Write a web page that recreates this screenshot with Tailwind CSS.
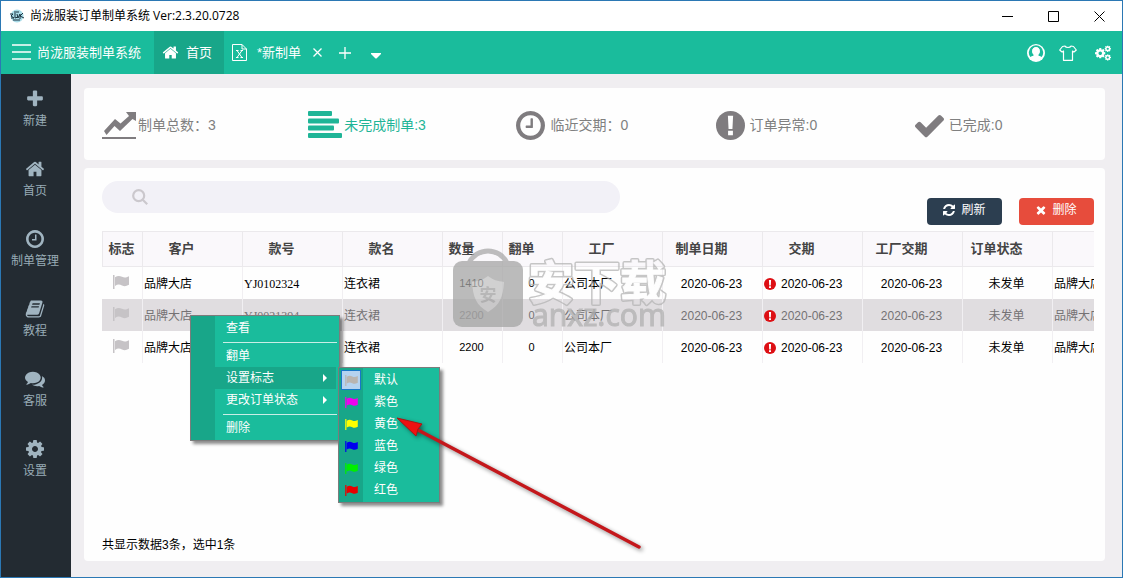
<!DOCTYPE html>
<html lang="zh-CN">
<head>
<meta charset="utf-8">
<meta name="viewport" content="width=device-width, initial-scale=1">
<title>尚泷服装订单制单系统</title>
<script src="https://cdn.jsdelivr.net/npm/@tailwindcss/browser@4"></script>
</head>
<body class="relative flex h-screen flex-col overflow-hidden border border-[#2b78b4] bg-[#f0eef1] font-['Liberation_Sans','Noto_Sans_CJK_SC',sans-serif] text-xs text-black">

<svg class="hidden" aria-hidden="true">
  <symbol id="home" viewBox="0 0 1792 1792"><path d="M1472 992v480q0 26-19 45t-45 19h-384v-384h-256v384h-384q-26 0-45-19t-19-45v-480q0-1 .5-3t.5-3l575-474 575 474q1 2 1 6zm223-69l-62 74q-8 9-21 11h-3q-13 0-21-7l-692-577-692 577q-12 8-24 7-13-2-21-11l-62-74q-8-10-7-23.5t11-21.5l719-599q32-26 76-26t76 26l244 204v-195q0-14 9-23t23-9h192q14 0 23 9t9 23v408l219 182q10 8 11 21.5t-7 23.5z"/></symbol>
  <symbol id="plus" viewBox="0 0 1792 1792"><path d="M1600 736v192q0 40-28 68t-68 28h-416v416q0 40-28 68t-68 28h-192q-40 0-68-28t-28-68v-416h-416q-40 0-68-28t-28-68v-192q0-40 28-68t68-28h416v-416q0-40 28-68t68-28h192q40 0 68 28t28 68v416h416q40 0 68 28t28 68z"/></symbol>
  <symbol id="clock" viewBox="128 128 1536 1536"><path d="M1024 544v448q0 14-9 23t-23 9h-320q-14 0-23-9t-9-23v-64q0-14 9-23t23-9h224v-352q0-14 9-23t23-9h64q14 0 23 9t9 23zm416 352q0-148-73-273t-198-198-273-73-273 73-198 198-73 273 73 273 198 198 273 73 273-73 198-198 73-273zm224 0q0 209-103 385.5t-279.5 279.5-385.5 103-385.5-103-279.5-279.5-103-385.5 103-385.5 279.5-279.5 385.5-103 385.5 103 279.5 279.5 103 385.5z"/></symbol>
  <symbol id="book" viewBox="0 0 1792 1792"><path d="M1703 478q40 57 18 129l-275 906q-19 64-76.5 107.5t-122.5 43.5h-923q-77 0-148.5-53.5t-99.5-131.5q-24-67-2-127 0-4 3-27t4-37q1-8-3-21.5t-3-19.5q2-11 8-21t16.5-23.5 16.5-23.5q23-38 45-91.5t30-91.5q3-10 .5-30t-.5-28q3-11 17-28t17-23q21-36 42-92t25-90q1-9-2.5-32t.5-28q4-13 22-30.5t22-22.5q19-26 42.5-84.5t27.5-96.5q1-8-3-25.5t-2-26.5q2-8 9-18t18-23 17-21q8-12 16.5-30.5t15-35 16-36 19.5-32 26.5-23.5 36-11.5 47.5 5.5l-1 3q38-9 51-9h761q74 0 114 56t18 130l-274 906q-36 119-71.5 153.5t-128.5 34.5h-869q-27 0-38 15-11 16-1 43 24 70 144 70h923q29 0 56-15.5t35-41.5l300-987q7-22 5-57 38 15 59 43zm-1064 2q-4 13 2 22.5t20 9.5h608q13 0 25.5-9.5t16.5-22.5l21-64q4-13-2-22.5t-20-9.5h-608q-13 0-25.5 9.5t-16.5 22.5zm-83 256q-4 13 2 22.5t20 9.5h608q13 0 25.5-9.5t16.5-22.5l21-64q4-13-2-22.5t-20-9.5h-608q-13 0-25.5 9.5t-16.5 22.5z"/></symbol>
  <symbol id="comments" viewBox="0 0 1792 1792"><path d="M1408 768q0 139-94 257t-256.5 186.5-353.5 68.5q-86 0-176-16-124 88-278 128-36 9-86 16h-3q-11 0-20.5-8t-11.5-21q-1-3-1-6.5t.5-6.5 2-6l2.5-5 3.5-5.5 4-5 4.5-5 4-4.5q5-6 23-25t26-29.5 22.5-29 25-38.5 20.5-44q-124-72-195-177t-71-224q0-139 94-257t256.500-186.500 353.500-68.500 353.500 68.500 256.500 186.500 94 257zm384 256q0 120-71 224.500t-195 176.500q10 24 20.500 44t25 38.500 22.500 29 26 29.500 23 25q1 1 4 4.500t4.500 5 4 5 3.500 5.500l2.500 5 2 6 .5 6.500-1 6.500q-3 14-13 22t-22 7q-50-7-86-16-154-40-278-128-90 16-176 16-271 0-472-132 58 4 88 4 161 0 309-45t264-129q125-92 192-212t67-254q0-77-23-152 129 71 204 178t75 230z"/></symbol>
  <symbol id="cog" viewBox="128 128 1536 1536"><path d="M1152 896q0-106-75-181t-181-75-181 75-75 181 75 181 181 75 181-75 75-181zm512-109v222q0 12-8 23t-20 13l-185 28q-19 54-39 91 35 50 107 138 10 12 10 25t-9 23q-27 37-99 108t-94 71q-12 0-26-9l-138-108q-44 23-91 38-16 136-29 186-7 28-36 28h-222q-14 0-24.5-8.5t-11.5-21.5l-28-184q-49-16-90-37l-141 107q-10 9-25 9-14 0-25-11-126-114-165-168-7-10-7-23 0-12 8-23 15-21 51-66.5t54-70.5q-27-50-41-99l-183-27q-13-2-21-12.5t-8-23.5v-222q0-12 8-23t19-13l186-28q14-46 39-92-40-57-107-138-10-12-10-24 0-10 9-23 26-36 98.5-107.5t94.5-71.5q13 0 26 10l138 107q44-23 91-38 16-136 29-186 7-28 36-28h222q14 0 24.5 8.5t11.5 21.5l28 184q49 16 90 37l142-107q9-9 24-9 13 0 25 10 129 119 165 170 7 8 7 22 0 12-8 23-15 21-51 66.5t-54 70.5q26 50 41 98l183 28q13 2 21 12.5t8 23.5z"/></symbol>
  <symbol id="check" viewBox="121 128 1550 1536"><path d="M1671 566q0 40-28 68l-724 724-136 136q-28 28-68 28t-68-28l-136-136-362-362q-28-28-28-68t28-68l136-136q28-28 68-28t68 28l294 295 656-657q28-28 68-28t68 28l136 136q28 28 28 68z"/></symbol>
  <symbol id="times" viewBox="200 200 1392 1392"><path d="M1490 1322q0 40-28 68l-136 136q-28 28-68 28t-68-28l-294-294-294 294q-28 28-68 28t-68-28l-136-136q-28-28-28-68t28-68l294-294-294-294q-28-28-28-68t28-68l136-136q28-28 68-28t68 28l294 294 294-294q28-28 68-28t68 28l136 136q28 28 28 68t-28 68l-294 294 294 294q28 28 28 68z"/></symbol>
  <symbol id="refresh" viewBox="128 128 1536 1536"><path d="M1639 1056q0 5-1 7-64 268-268 434.5t-478 166.5q-146 0-282.5-55t-243.5-157l-129 129q-19 19-45 19t-45-19-19-45v-448q0-26 19-45t45-19h448q26 0 45 19t19 45-19 45l-137 137q71 66 161 102t187 36q134 0 250-65t186-179q11-17 53-117 8-23 30-23h192q13 0 22.500 9.500t9.500 22.500zm25-800v448q0 26-19 45t-45 19h-448q-26 0-45-19t-19-45 19-45l138-138q-148-137-349-137-134 0-250 65t-186 179q-11 17-53 117-8 23-30 23h-199q-13 0-22.500-9.500t-9.500-22.500v-7q65-268 270-434.500t480-166.500q146 0 284 55.500t245 156.500l130-129q19-19 45-19t45 19 19 45z"/></symbol>
  <symbol id="flag" viewBox="0 0 16 14"><path d="M0 0h1.500v14H0zM2 2.300C4.500.6 6.500.6 9 1.800s4 .9 7-.6v8.600c-3 1.500-4.500 1.800-7 .6s-4.500-1.200-7 .5z"/></symbol>
  <symbol id="alert" viewBox="0 0 30 30"><circle cx="15" cy="15" r="15"/><path fill="#fff" d="M12.300 5h5.400l-.7 13.500h-4zM12.500 20.500h5v4.500h-5z"/></symbol>
</svg>

<!-- Window title bar -->
<header class="flex h-[30px] shrink-0 items-center bg-white pl-2">
  <svg class="size-4" viewBox="0 0 16 16" fill="none">
    <circle cx="8" cy="8" r="6.500" fill="#a9dbe8"/>
    <path d="M1 6l3 0-2 2 3 2-3 0M6 5l0 5 3-1M8 6l1 4 2-4 0 5M14 5l-3 3 4 2M4 12l7 0M5 4l5 0" stroke="#1b3340"/>
  </svg>
  <h1 class="ml-[5px] flex-1 font-['Open_Sans','Noto_Sans_CJK_SC',sans-serif]">尚泷服装订单制单系统 Ver:2.3.20.0728</h1>
  <button type="button" aria-label="最小化" class="grid h-full w-[46px] place-items-center"><svg class="size-[11px]" viewBox="0 0 11 11" stroke="#000"><path d="M0 5.500h11"/></svg></button>
  <button type="button" aria-label="最大化" class="grid h-full w-[46px] place-items-center"><svg class="size-[11px]" viewBox="0 0 11 11" fill="none" stroke="#000"><path d="M.5.500h10v10H.5z"/></svg></button>
  <button type="button" aria-label="关闭" class="grid h-full w-[46px] place-items-center"><svg class="size-[11px]" viewBox="0 0 11 11" stroke="#000"><path d="M.5.500l10 10M10.500.500l-10 10"/></svg></button>
</header>

<!-- Tab bar -->
<nav aria-label="标签页" class="flex h-[43px] shrink-0 items-center bg-[#1abc9c] text-[13px] text-white">
  <button type="button" class="flex h-full w-[153px] items-center gap-[6px] pl-[11px]">
    <svg class="h-4 w-[19px] -translate-y-px" viewBox="0 0 19 16" stroke="#fff" stroke-width="1.500"><path d="M0 1h19M0 8h19M0 15h19"/></svg>
    <span>尚泷服装制单系统</span>
  </button>
  <button type="button" class="flex h-full w-[70px] items-center gap-[7px] bg-[#18a689] pl-2">
    <svg class="size-[17px] fill-white"><use href="#home"/></svg>
    <span>首页</span>
  </button>
  <button type="button" class="flex h-full items-center gap-[10px] pl-2">
    <svg class="h-[17px] w-[15px]" viewBox="0 0 15 17" fill="none" stroke="#fff"><path d="M.5.500h9.500l4.500 4.500v11.500H.5zM10 .5V5h4.500"/><path d="M5 6.500l5 7M10 6.500l-5 7M4 6.500h2.500M8.500 6.500H11M4 13.500h2.500M8.500 13.500H11"/></svg>
    <span>*新制单</span>
  </button>
  <button type="button" aria-label="关闭标签" class="ml-3 grid size-[9px] place-items-center"><svg class="size-[9px]" viewBox="0 0 9 9" stroke="#fff" stroke-width="1.300"><path d="M.5.500l8 8M8.500.500l-8 8"/></svg></button>
  <button type="button" aria-label="新标签" class="ml-[17px] grid size-3 place-items-center"><svg class="size-3" viewBox="0 0 12 12" stroke="#fff" stroke-width="1.300"><path d="M0 6h12M6 0v12"/></svg></button>
  <button type="button" aria-label="更多" class="ml-5 grid h-3 place-items-center pt-[6px]"><svg class="h-[6px] w-[10px]" viewBox="0 0 10 6" fill="#fff"><path d="M0 0h10v1L6 5q-1 1-2 0L0 1z"/></svg></button>
  <div class="ml-auto flex items-center pr-[11px]">
    <button type="button" aria-label="用户"><svg class="size-[18px]" viewBox="0 0 18 18"><circle cx="9" cy="9" r="9" fill="#fff"/><path fill="#1abc9c" d="M9 3c2.500 0 3.800 1.800 3.800 4.200 0 1.600-.7 2.900-1.600 3.700v.6l3.400 1.600a7.200 7.200 0 1 0-11.200 0l3.400-1.600v-.6c-.9-.8-1.600-2.100-1.600-3.700C5.200 4.800 6.500 3 9 3z"/><circle cx="9" cy="7.200" r="3.700" fill="#fff"/><path fill="#fff" d="M7 10h4v1.500l3.700 1.700a7.200 7.200 0 0 1-11.400 0L7 11.500z"/></svg></button>
    <button type="button" aria-label="皮肤" class="ml-[14px]"><svg class="h-4 w-[18px]" viewBox="0 0 18 16" fill="none" stroke="#fff" stroke-width="1.200" stroke-linejoin="round"><path d="M6 1L3.500 1.500.700 5l2.300 2 1.500-1v9.300h9V6L15 7l2.300-2-2.800-3.500L12 1c-.8 2-5.200 2-6 0z"/></svg></button>
    <button type="button" aria-label="设置选项" class="ml-[18px]"><svg class="size-4 fill-white" viewBox="0 0 16 16"><use href="#cog" x="0" y="3" width="10.500" height="10.500"/><use href="#cog" x="9.500" y="0.500" width="6.500" height="6.500"/><use href="#cog" x="9.500" y="9.200" width="6.500" height="6.500"/></svg></button>
  </div>
</nav>

<div class="flex min-h-0 flex-1">
  <!-- Sidebar -->
  <nav aria-label="主导航" class="flex w-[70px] shrink-0 flex-col bg-[#232b32] fill-[#a0b4c0] pr-[2px] text-[#98abb6]">
    <a href="#" class="flex h-[70px] flex-col items-center gap-1 pt-[15px] leading-4"><svg class="size-5"><use href="#plus"/></svg>新建</a>
    <a href="#" class="flex h-[70px] flex-col items-center gap-1 pt-[15px] leading-4"><svg class="size-5"><use href="#home"/></svg>首页</a>
    <a href="#" class="flex h-[70px] flex-col items-center gap-1 pt-[15px] leading-4"><svg class="size-5 p-px"><use href="#clock"/></svg>制单管理</a>
    <a href="#" class="flex h-[70px] flex-col items-center gap-1 pt-[15px] leading-4"><svg class="size-5"><use href="#book"/></svg>教程</a>
    <a href="#" class="flex h-[70px] flex-col items-center gap-1 pt-[15px] leading-4"><svg class="size-5"><use href="#comments"/></svg>客服</a>
    <a href="#" class="flex h-[70px] flex-col items-center gap-1 pt-[15px] leading-4"><svg class="size-5 p-px"><use href="#cog"/></svg>设置</a>
  </nav>

  <main class="flex min-w-0 flex-1 flex-col gap-2 pt-[14px] pr-[17px] pb-4 pl-[13px]">
    <!-- Statistics -->
    <section aria-label="统计" class="grid h-[72px] shrink-0 grid-cols-[206fr_208fr_199fr_199fr_190fr] items-center rounded bg-[#fefefe] pt-[2px] pl-[18px] text-sm text-[#808080] fill-[#7f7c7f]">
      <div class="flex items-center gap-[2px]"><svg class="h-7 w-[34px]" viewBox="0 0 34 28"><path d="M0 26h34v2H0zM2 20L13 8l5.500 4.500L27 5l-3-4h10v9l-3.500-2L18 20l-5.500-5-8 9z"/></svg>制单总数：3</div>
      <div class="flex items-center gap-[2px] fill-[#1fb597] text-[#1fb597]"><svg class="h-7 w-[34px]" viewBox="0 0 34 28"><rect y="0" width="24" height="5" rx="1"/><rect y="7.500" width="31" height="5" rx="1"/><rect y="14.500" width="26" height="5" rx="1"/><rect y="22" width="34" height="5" rx="1"/></svg>未完成制单:3</div>
      <div class="flex items-center gap-[5px]"><svg class="size-[29px]"><use href="#clock"/></svg>临近交期：0</div>
      <div class="flex items-center gap-[5px]"><svg class="size-[29px]"><use href="#alert"/></svg>订单异常:0</div>
      <div class="flex items-center gap-[5px]"><svg class="size-[29px]"><use href="#check"/></svg>已完成:0</div>
    </section>

    <!-- Order list -->
    <section aria-label="订单列表" class="flex min-h-0 flex-1 flex-col rounded bg-[#fefefe] pt-[13px] pr-[11px] pb-2 pl-[18px]">
      <div class="mb-[6px] flex h-11 items-end gap-[17px]">
        <label class="mr-auto flex h-8 w-[518px] items-center gap-2 self-start rounded-full bg-[#f2f1f7] pl-[30px]">
          <svg class="size-4 shrink-0" viewBox="0 0 16 16" fill="none" stroke="#cbc8cd" stroke-width="2.200"><circle cx="6.700" cy="6.700" r="5.500"/><path d="M10.700 10.700l4.500 4.500"/></svg>
          <input type="search" aria-label="搜索" class="min-w-0 flex-1 bg-transparent outline-none">
        </label>
        <button type="button" class="flex h-[27px] w-[75px] items-center justify-center gap-[6px] rounded bg-[#2c3e50] pb-1 text-white"><svg class="size-3 fill-white"><use href="#refresh"/></svg>刷新</button>
        <button type="button" class="flex h-[27px] w-[75px] items-center justify-center gap-[6px] rounded bg-[#e74c3c] pb-1 text-white"><svg class="size-[10px] fill-white"><use href="#times"/></svg>删除</button>
      </div>

      <div class="overflow-hidden">
        <table class="w-[1050px] min-w-full table-fixed border-separate border-spacing-0">
          <colgroup><col class="w-10"><col class="w-[100px]"><col class="w-[100px]"><col class="w-[100px]"><col class="w-[60px]"><col class="w-[60px]"><col class="w-[100px]"><col class="w-[100px]"><col class="w-[100px]"><col class="w-[100px]"><col class="w-[90px]"><col class="w-[100px]"></colgroup>
          <thead class="bg-[#faf8fb] text-[13px] text-[#444] [&_th]:h-9 [&_th]:border-y [&_th]:border-l [&_th]:border-[#ebe9ec] [&_th]:p-0 [&_th]:pr-[22px] [&_th]:font-bold">
            <tr><th scope="col" class="pr-[2px]!">标志</th><th scope="col">客户</th><th scope="col">款号</th><th scope="col">款名</th><th scope="col">数量</th><th scope="col">翻单</th><th scope="col">工厂</th><th scope="col">制单日期</th><th scope="col">交期</th><th scope="col">工厂交期</th><th scope="col">订单状态</th><th scope="col"></th></tr>
          </thead>
          <tbody class="text-center [&_td]:h-8 [&_td]:border-l [&_td]:border-[#f1eff2] [&_td]:pt-px [&_td]:pr-[3px] [&_td]:pb-0 [&_td]:pl-px">
            <tr>
              <td class="border-l-0!"><svg aria-label="默认标志" class="mx-auto mb-1 h-[14px] w-4 fill-[#c6c3c6]"><use href="#flag"/></svg></td>
              <td class="text-left">品牌大店</td><td class="text-left font-['Liberation_Serif',serif]">YJ0102324</td><td class="text-left">连衣裙</td><td class="text-[11px]">1410</td><td class="text-[11px]">0</td><td class="text-left">公司本厂</td><td>2020-06-23</td>
              <td><span class="flex items-center gap-[5px]"><svg aria-label="临期" class="size-3 fill-[#dd0f14]"><use href="#alert"/></svg>2020-06-23</span></td>
              <td>2020-06-23</td><td>未发单</td><td class="text-left">品牌大店</td>
            </tr>
            <tr aria-selected="true" class="bg-[#e0dde0] text-[#747274]">
              <td class="border-l-0!"><svg aria-label="默认标志" class="mx-auto mb-1 h-[14px] w-4 fill-[#c6c3c6]"><use href="#flag"/></svg></td>
              <td class="text-left">品牌大店</td><td class="text-left font-['Liberation_Serif',serif]">YJ0021394</td><td class="text-left">连衣裙</td><td class="text-[11px]">2200</td><td class="text-[11px]">0</td><td class="text-left">公司本厂</td><td>2020-06-23</td>
              <td><span class="flex items-center gap-[5px]"><svg aria-label="临期" class="size-3 fill-[#dd0f14]"><use href="#alert"/></svg>2020-06-23</span></td>
              <td>2020-06-23</td><td>未发单</td><td class="text-left">品牌大店</td>
            </tr>
            <tr>
              <td class="border-l-0!"><svg aria-label="默认标志" class="mx-auto mb-1 h-[14px] w-4 fill-[#c6c3c6]"><use href="#flag"/></svg></td>
              <td class="text-left">品牌大店</td><td></td><td class="text-left">连衣裙</td><td class="text-[11px]">2200</td><td class="text-[11px]">0</td><td class="text-left">公司本厂</td><td>2020-06-23</td>
              <td><span class="flex items-center gap-[5px]"><svg aria-label="临期" class="size-3 fill-[#dd0f14]"><use href="#alert"/></svg>2020-06-23</span></td>
              <td>2020-06-23</td><td>未发单</td><td class="text-left">品牌大店</td>
            </tr>
          </tbody>
        </table>
      </div>
      <p class="mt-auto leading-4">共显示数据3条，选中1条</p>
    </section>
  </main>
</div>

<!-- Watermark -->
<svg class="pointer-events-none absolute top-[244px] left-[450px] h-[90px] w-[220px]" viewBox="0 0 220 90">
  <mask id="hollow" maskUnits="userSpaceOnUse" x="0" y="0" width="220" height="90"><rect width="220" height="90" fill="#fff"/><text x="77" y="54" font-family="Noto Sans CJK SC" font-weight="700" font-size="46" fill="#000" stroke="#000" stroke-width="1">安下载</text></mask>
  <g opacity=".75">
    <path d="M18 18a21 21 0 0 1 38 0" fill="none" stroke="#a9a9a9" stroke-width="5"/>
    <rect x="2" y="16" width="70" height="66" rx="9" fill="#a5a5a5"/>
    <path d="M37 31c5 4 10 5 16 6-1 15-4 23-16 30-12-7-15-15-16-30 6-1 11-2 16-6z" fill="#c2c2c2"/>
    <text x="37" y="56" text-anchor="middle" font-family="Noto Sans CJK SC" font-weight="700" font-size="17" fill="#a0a0a0">安</text>
    <g mask="url(#hollow)"><text x="77" y="54" font-family="Noto Sans CJK SC" font-weight="700" font-size="46" fill="none" stroke="#b4b4b4" stroke-width="4" stroke-linejoin="round">安下载</text></g>
    <text x="81" y="81" font-family="Noto Sans" font-size="30" fill="#b0b0b0" stroke="#b0b0b0">anxz.com</text>
  </g>
</svg>

<!-- Row context menu -->
<div role="menu" aria-label="订单操作" class="absolute top-[314px] left-[189px] w-[150px] border border-[#7c7c7c] bg-[linear-gradient(to_right,#18a689_24px,#1abc9c_24px)] py-px text-white shadow-[3px_3px_3px_rgba(0,0,0,0.45)]">
  <button type="button" role="menuitem" class="block h-[22px] w-full pl-[35px] text-left">查看</button>
  <hr class="mt-[3px] mr-[2px] mb-[2px] ml-8 border-[#c9eee6]">
  <button type="button" role="menuitem" class="block h-[22px] w-full pl-[35px] text-left">翻单</button>
  <button type="button" role="menuitem" aria-haspopup="menu" aria-expanded="true" class="mr-[2px] ml-6 flex h-[22px] w-[121px] items-center justify-between bg-[#18a689] pr-[9px] pl-[11px]">设置标志<svg class="h-2 w-1 fill-white" viewBox="0 0 4 8"><path d="M0 0l4 4-4 4z"/></svg></button>
  <button type="button" role="menuitem" aria-haspopup="menu" class="mr-[2px] ml-6 flex h-[22px] w-[121px] items-center justify-between pr-[9px] pl-[11px]">更改订单状态<svg class="h-2 w-1 fill-white" viewBox="0 0 4 8"><path d="M0 0l4 4-4 4z"/></svg></button>
  <hr class="mt-[3px] mr-[2px] mb-[2px] ml-8 border-[#c9eee6]">
  <button type="button" role="menuitem" class="block h-[22px] w-full pl-[35px] text-left">删除</button>
</div>

<!-- Flag colour submenu -->
<div role="menu" aria-label="设置标志" class="absolute top-[366px] left-[337px] w-[102px] border border-[#7c7c7c] bg-[linear-gradient(to_right,#18a689_24px,#1abc9c_24px)] py-px text-white shadow-[3px_3px_3px_rgba(0,0,0,0.45)]">
  <button type="button" role="menuitemradio" aria-checked="true" class="flex h-[22px] w-full items-center gap-[13px] pl-[2px]"><span class="grid size-5 place-items-center border border-[#1778c8] bg-[#b5d3f0]"><svg class="h-[11px] w-[13px] fill-[#b9b5b0]"><use href="#flag"/></svg></span>默认</button>
  <button type="button" role="menuitemradio" aria-checked="false" class="flex h-[22px] w-full items-center gap-[13px] pl-[2px]"><span class="grid size-5 place-items-center"><svg class="h-[11px] w-[13px] fill-[#ee00ee]"><use href="#flag"/></svg></span>紫色</button>
  <button type="button" role="menuitemradio" aria-checked="false" class="flex h-[22px] w-full items-center gap-[13px] pl-[2px]"><span class="grid size-5 place-items-center"><svg class="h-[11px] w-[13px] fill-[#ffff00]"><use href="#flag"/></svg></span>黄色</button>
  <button type="button" role="menuitemradio" aria-checked="false" class="flex h-[22px] w-full items-center gap-[13px] pl-[2px]"><span class="grid size-5 place-items-center"><svg class="h-[11px] w-[13px] fill-[#0000ee]"><use href="#flag"/></svg></span>蓝色</button>
  <button type="button" role="menuitemradio" aria-checked="false" class="flex h-[22px] w-full items-center gap-[13px] pl-[2px]"><span class="grid size-5 place-items-center"><svg class="h-[11px] w-[13px] fill-[#00ee00]"><use href="#flag"/></svg></span>绿色</button>
  <button type="button" role="menuitemradio" aria-checked="false" class="flex h-[22px] w-full items-center gap-[13px] pl-[2px]"><span class="grid size-5 place-items-center"><svg class="h-[11px] w-[13px] fill-[#e80000]"><use href="#flag"/></svg></span>红色</button>
</div>

<!-- Pointer arrow -->
<svg class="pointer-events-none absolute top-[409px] left-[389px] h-[150px] w-[260px] drop-shadow-[2px_2px_2px_rgba(0,0,0,0.45)]" viewBox="0 0 260 150">
  <path d="M28 20L249 137" stroke="#c4171b" stroke-width="3.500" stroke-linecap="round"/>
  <path d="M7 8l25 6-4 5-2 7z" fill="#ee1111" stroke="#a81515"/>
</svg>
</body>
</html>
